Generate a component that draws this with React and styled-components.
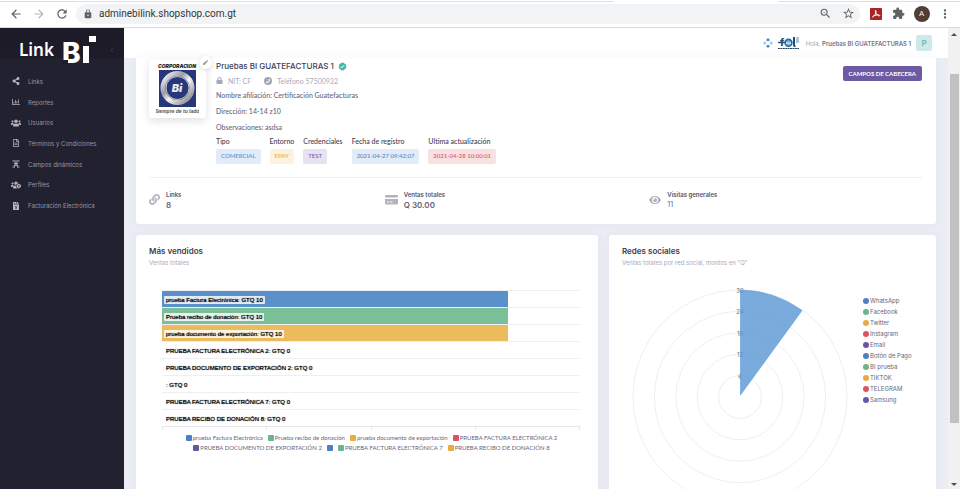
import React from "react";
import styled, { createGlobalStyle } from "styled-components";
import {
  FaShareAlt, FaRegChartBar, FaUsers, FaRegFileAlt, FaUsersCog, FaFileInvoiceDollar,
  FaLink, FaEye, FaLock, FaPen, FaPhone, FaChevronLeft,
} from "react-icons/fa";
import {
  MdArrowBack, MdArrowForward, MdRefresh, MdLock, MdZoomOut, MdStarBorder,
  MdExtension, MdMoreVert, MdVerified,
} from "react-icons/md";

const C = {
  blue: "#4c7fc3", green: "#68b68a", orange: "#e9ab41", red: "#dc5360", purple: "#6657a5",
  ink: "#413d51", text: "#68657b", muted: "#a9a9b8", line: "#efeff2", page: "#ebedf5",
};

const Global = createGlobalStyle`
  * { box-sizing: border-box; }
  html, body, #root { height: 100%; }
  body { margin: 0; overflow: hidden; background: #fff; font-family: Inter, "Noto Sans", sans-serif; font-size: 7px; color: ${C.text}; }
  button, input { font: inherit; border: 0; padding: 0; background: none; color: inherit; }
  a { color: inherit; text-decoration: none; }
  svg { display: block; flex: none; }
  h1, h2, p, dl, dd, dt, ul { margin: 0; padding: 0; }
`;

const Window = styled.div`
  display: flex; flex-direction: column; height: 100vh; padding-right: 2px;
`;
const BrowserBar = styled.header`
  display: flex; align-items: center; flex: none; height: 28px; padding: 0 4px;
  background: linear-gradient(90deg, #dcdee1 0 64%, #fff 64% 81%, #dcdee1 81%) 0 1px / 100% 1px no-repeat #fff;
  border-bottom: 1px solid #dcdcde; color: #5f6368;
`;
const ToolButton = styled.button`
  display: grid; place-items: center; width: 23px; height: 20px; color: ${(p) => p.$color || "#5f6368"};
`;
const NavButtons = styled.div`
  display: flex; width: 72px;
`;
const Address = styled.label`
  display: flex; align-items: center; flex: 1; min-width: 0; height: 20px; padding-left: 7px;
  border-radius: 10px; background: #f1f3f4;
`;
const AddressInput = styled.input`
  flex: 1; min-width: 0; margin-left: 6px; font: 10px Roboto, sans-serif; color: #33363b; outline: none;
`;
const Extensions = styled.div`
  display: flex; align-items: center; padding-left: 4px;
`;
const Avatar = styled.span`
  display: grid; place-items: center; width: 16px; height: 16px; border-radius: 50%;
  background: #553c35; color: #fff; font: 8px Roboto, sans-serif;
`;
const Body = styled.div`
  display: flex; flex: 1; min-height: 0;
`;
const Sidebar = styled.aside`
  flex: none; width: 124px; background: #22212f; color: #9696a8; overflow: hidden;
`;
const Brand = styled.div`
  display: flex; align-items: center; justify-content: space-between; height: 43px; padding: 0 1px 0 19px;
  background: linear-gradient(#1e1b28, #1e1c29) 0 0 / 100% 30px no-repeat;
`;
const BrandLink = styled.a`
  display: flex; align-items: center; gap: 8px; color: #fff; font: 600 17px "Noto Sans", sans-serif;
`;
const Menu = styled.nav`
  display: grid; grid-auto-rows: 1fr; height: 145px;
`;
const MenuLink = styled.a`
  display: flex; align-items: center; gap: 7px; padding-left: 10px; font-size: 6px; white-space: nowrap;
`;
const MenuIcon = styled.span`
  display: grid; place-items: center; width: 11px; color: #b3b3c4;
`;
const Main = styled.main`
  display: flex; flex-direction: column; flex: 1; min-width: 0; background: ${C.page}; overflow: hidden;
`;
const TopBar = styled.div`
  display: flex; align-items: center; justify-content: flex-end; gap: 5px; flex: none; height: 30px;
  padding-right: 16px; background: #fff; color: #a5a5b5; white-space: nowrap; font-size: 6px;
`;
const Hello = styled.span`
  b { font-weight: 600; color: #77748a; }
`;
const UserBadge = styled.button`
  width: 16px; height: 16px; border-radius: 2px; background: #cde9e9; color: #62bfbb; font-size: 8px; font-weight: 600;
`;
const Content = styled.div`
  display: flex; flex-direction: column; gap: 11px; flex: 1; min-height: 0; padding: 0 12px;
`;
const Card = styled.section`
  min-width: 0; padding: ${(p) => p.$pad || "10px 14px 0 13px"}; border-radius: ${(p) => p.$radius || "3px 3px 0 0"};
  background: #fff; box-shadow: 0 0 10px rgba(82, 63, 105, 0.05);
`;
const Profile = styled.div`
  display: flex; align-items: flex-start; gap: 10px; height: 120px; border-bottom: 1px solid ${C.line};
  font-family: Lato, sans-serif;
`;
const Thumb = styled.div`
  position: relative; flex: none; width: 57px; height: 58px; margin-top: 2px; padding: 3px 7px 0;
  border-radius: 3px; background: #fff; box-shadow: 0 3px 9px rgba(0, 0, 0, 0.12);
`;
const EditButton = styled.button`
  position: absolute; top: -4px; right: -6px; display: grid; place-items: center; width: 13px; height: 13px;
  border-radius: 50%; background: #fff; color: #9a98a8; box-shadow: 0 1px 5px rgba(0, 0, 0, 0.14);
`;
const Details = styled.div`
  flex: 1; min-width: 0; white-space: nowrap;
`;
const Name = styled.h1`
  display: flex; align-items: center; gap: 4px; height: 16px; font: 500 8px Inter, sans-serif; color: ${C.ink};
`;
const Facts = styled.p`
  display: flex; align-items: center; gap: 13px; height: 13px; color: ${C.muted};
`;
const Fact = styled.span`
  display: flex; align-items: center; gap: 5px;
`;
const PhoneDot = styled.span`
  display: grid; place-items: center; width: 8px; height: 8px; border-radius: 50%; background: #a6a5b6; color: #fff;
`;
const Line = styled.p`
  height: 16px; line-height: 16px; font-weight: 500;
`;
const Tags = styled.dl`
  display: flex; gap: 9px;
`;
const TagGroup = styled.div`
  dt { height: 14px; line-height: 12px; font-weight: 500; color: ${C.ink}; }
`;
const Tag = styled.dd`
  width: max-content; height: 15px; padding: 0 5px; border-radius: 2px; line-height: 14px; font-size: 6px; font-weight: 600;
  background: ${(p) => p.$bg}; color: ${(p) => p.$fg};
`;
const HeaderButton = styled.button`
  flex: none; height: 15px; margin-top: 8px; padding: 0 6px; border-radius: 2px; background: #6d5aa2;
  color: #fff; font-size: 6px; font-weight: 700;
`;
const Stats = styled.div`
  display: grid; grid-template-columns: 236fr 265fr 273fr; height: 46px; padding-bottom: 3px;
`;
const Stat = styled.div`
  display: flex; align-items: center; gap: 6px; color: #b3b1c0;
`;
const StatText = styled.div`
  line-height: 10px; font-size: ${(p) => (p.$link ? 7 : 8)}px; font-weight: ${(p) => (p.$link ? 500 : 600)}; color: ${C.text};
  strong { display: block; font-size: 6px; font-weight: 600; color: #55516a; }
  a { color: #5c86cb; }
`;
const Charts = styled.div`
  display: grid; grid-template-columns: 462fr 327fr; gap: 11px; flex: 1; min-height: 0;
`;
const Title = styled.h2`
  line-height: 12px; font-size: 8px; font-weight: 600; color: #403c4f;
`;
const Subtitle = styled.p`
  line-height: 12px; font-size: 6px; color: #aaa9b8;
`;
const Plot = styled.div`
  display: grid; grid-auto-rows: 17px; margin: 21px 4px 0 13px;
`;
const BarRow = styled.div`
  display: flex; align-items: center; position: relative; padding: 1px 0 0 2px; border-top: 1px solid ${C.line};
`;
const Bar = styled.div`
  position: absolute; inset: 0 auto 0 0; border-right: 1px solid #fff;
  background: ${(p) => p.$color};
`;
const BarLabel = styled.span`
  position: relative; padding: 0 2px; border-radius: 1px; background: rgba(255, 255, 255, 0.82);
  font: 6px/8px "Liberation Sans", sans-serif; color: #000; text-shadow: 0 0 1px #000; white-space: nowrap;
`;
const Axis = styled.div`
  display: grid; grid-template-columns: repeat(4, 1fr); height: 4px; margin: 0 4px 0 13px;
  border: solid #e6e6ea; border-width: 1px 1px 0 0;
  i { border-left: 1px solid #e6e6ea; }
`;
const Legend = styled.ul`
  display: flex; flex-wrap: wrap; justify-content: center; gap: 0 5px; margin: 3px 20px 0 30px; list-style: none;
  line-height: 10px; font-size: 6px; font-family: Lato, sans-serif;
`;
const LegendItem = styled.li`
  display: flex; align-items: center; gap: 1px; white-space: nowrap;
  &::before { content: ""; width: 6px; height: 6px; border-radius: ${(p) => (p.$round ? "50%" : "1px")}; background: ${(p) => p.$color}; }
`;
const PolarArea = styled.div`
  display: flex; align-items: flex-start; margin-top: 14px;
`;
const PolarLegend = styled.ul`
  margin-top: 12px; padding: 0; list-style: none; line-height: 11px; font-size: 6px;
`;
const Scrollbar = styled.div`
  display: flex; flex-direction: column; align-items: center; justify-content: space-between;
  flex: none; width: 12px; padding: 5px 0 3px; background: #f1f1f1;
`;
const ScrollThumb = styled.div`
  width: 9px; flex: 0 1 349px; margin: 0 0 22px; background: #c1c1c1;
`;
const Arrow = styled.span`
  border: solid transparent; border-width: 0 3px;
  ${(p) => (p.$down ? "border-top: 3px solid #505050;" : "border-bottom: 3px solid #505050;")}
`;

const FieldsIcon = () => (
  <svg width="8" height="8" viewBox="0 0 16 16" fill="none" stroke="currentColor" strokeWidth="2.4">
    <path d="M1 2h14M1 14h5M10 14h5M4 6l8 6M12 6l-8 6M5 6h6" />
  </svg>
);
const CardIcon = () => (
  <svg width="13" height="10" viewBox="0 0 13 10" fill="#b3b1c0">
    <rect width="13" height="2.6" rx="1" />
    <path fillRule="evenodd" d="M0 4h13v4.6a1 1 0 0 1-1 1H1a1 1 0 0 1-1-1zM2 6.6v1h2v-1zM5 6.6v1h2.5v-1z" />
  </svg>
);
const BiMark = () => (
  <svg width="35" height="42" viewBox="-1 -7 35 42" fill="#fff">
    <text x="-1" y="27" fontFamily="Inter, sans-serif" fontWeight="800" fontSize="28">B</text>
    <path fill="#1f1d2a" d="M-1 24h6v5h-6z" />
    <rect x="20" y="10" width="6" height="17" />
    <rect x="26" y="0" width="7" height="6" />
  </svg>
);
const MoveIcon = () => (
  <svg width="10" height="10" viewBox="0 0 20 20">
    <path fill="#4f86cc" d="M10 0l4 4-4 3-4-3zM10 20l4-4-4-3-4 3z" />
    <path fill="#a8c6ea" d="M0 10l4-4 3 4-3 4zM20 10l-4-4-3 4 3 4z" />
  </svg>
);
const FelLogo = () => (
  <svg width="22" height="13" viewBox="0 0 22 13">
    <text x="2" y="9" fontFamily="Inter, sans-serif" fontSize="10" fontWeight="800" fill="#234d73">f</text>
    <path d="M0 5.500h7" stroke="#234d73" strokeWidth="1.400" />
    <circle cx="10.500" cy="5.800" r="3.400" fill="#78b5e3" stroke="#2b6698" strokeWidth="1.600" />
    <path d="M8 6.200h5" stroke="#e8f4fb" strokeWidth="1" />
    <path d="M16 0v8.200q0 1 1.500 1" fill="none" stroke="#234d73" strokeWidth="2" />
    <path d="M18 1h3M18 3h3M18 5h3" stroke="#6f8da5" strokeWidth="1.200" />
    <path d="M0 11.500h21" stroke="#27455f" strokeWidth="1" strokeDasharray="2 .4" />
  </svg>
);
const AcrobatIcon = () => (
  <svg width="12" height="12" viewBox="0 0 12 12">
    <rect width="12" height="12" rx="1" fill="#a82523" />
    <path d="M2.500 9c1.400-.4 3.700-3.300 3.500-6.200-.1-.8-1-.6-.7.4C5.800 5.500 7.500 7.800 9 8c1.300-.1.700-1.300-.7-1.200C6 6.900 3.500 7.700 2.500 9z" fill="none" stroke="#fff" />
  </svg>
);
const CompanyLogo = () => (
  <svg width="43" height="53" viewBox="0 0 43 53" role="img" aria-label="Corporación Bi">
    <defs>
      <linearGradient id="silver" x1="0" y1="0" x2="1" y2="1">
        <stop offset="0" stopColor="#fff" /><stop offset=".35" stopColor="#999da3" />
        <stop offset=".55" stopColor="#f4f4f4" /><stop offset="1" stopColor="#777b82" />
      </linearGradient>
    </defs>
    <text x="21" y="5" textAnchor="middle" fontFamily="Inter, sans-serif" fontSize="5" fontWeight="900" fontStyle="italic" fill="#222">CORPORACION</text>
    <rect x="3" y="7" width="37" height="37" fill="#283779" />
    <circle cx="21.500" cy="25" r="14.500" fill="#283779" stroke="url(#silver)" strokeWidth="5" />
    <circle cx="21.500" cy="25" r="11.500" fill="none" stroke="#c9cbd2" strokeWidth="1" />
    <text x="21" y="29" textAnchor="middle" fontFamily="Inter, sans-serif" fontSize="11" fontWeight="900" fontStyle="italic" fill="#e7e8ec">Bi</text>
    <text x="21" y="50" textAnchor="middle" fontFamily="Liberation Sans, sans-serif" fontSize="5" fontWeight="700" fontStyle="italic" fill="#555">Siempre de tu lado</text>
  </svg>
);
const PolarChart = () => (
  <svg width="241" height="220" viewBox="0 0 241 220" role="img" aria-label="Ventas por red social">
    <g fill="none" stroke="#efeff1">
      {[1, 2, 3, 4, 5].map((n) => <circle key={n} cx="118" cy="114" r={n * 21.4} />)}
    </g>
    <g fontFamily="Inter, sans-serif" fontSize="6" fill="#6d6a78" textAnchor="middle">
      {[30, 24, 18, 12, 6].map((v, i) => <text key={v} x="118" y={10 + i * 21.4}>{v}</text>)}
    </g>
    <path d="M118.500 112V7A107 107 0 0 1 180 27.500z" fill="#5897d3" fillOpacity=".8" stroke="#5e9bd6" strokeWidth=".6" />
  </svg>
);

const menu = [
  ["Links", <FaShareAlt size={8} />], ["Reportes", <FaRegChartBar size={8} />], ["Usuarios", <FaUsers size={10} />],
  ["Términos y Condiciones", <FaRegFileAlt size={8} />], ["Campos dinámicos", <FieldsIcon />],
  ["Perfiles", <FaUsersCog size={10} />], ["Facturación Electrónica", <FaFileInvoiceDollar size={8} />],
];
const tags = [
  ["Tipo", "COMERCIAL", "#e1ecf8", "#6a94d0"], ["Entorno", "EPAY", "#fdf2df", "#e8b256"],
  ["Credenciales", "TEST", "#e8e2f0", "#7d66ad"], ["Fecha de registro", "2021-04-27 09:42:07", "#e1ecf8", "#6488c4"],
  ["Ultima actualización", "2021-04-28 10:00:01", "#f9e1e3", "#d55f69"],
];
const products = [
  ["prueba Factura Electrónica", 10, C.blue, "#5b91cb"], ["Prueba recibo de donación", 10, C.green, "#7bbf99"],
  ["prueba documento de exportación", 10, C.orange, "#ecbb5c"], ["PRUEBA FACTURA ELECTRÓNICA 2", 0, C.red],
  ["PRUEBA DOCUMENTO DE EXPORTACIÓN 2", 0, C.purple], ["", 0, C.blue],
  ["PRUEBA FACTURA ELECTRÓNICA 7", 0, C.green], ["PRUEBA RECIBO DE DONACIÓN 8", 0, C.orange],
];
const networks = ["WhatsApp", "Facebook", "Twitter", "Instagram", "Email", "Botón de Pago", "BI prueba", "TIKTOK", "TELEGRAM", "Samsung"];
const palette = [C.blue, C.green, C.orange, C.red, C.purple];

export default function App() {
  return (
    <Window>
      <Global />
      <BrowserBar>
        <NavButtons>
          <ToolButton aria-label="Atrás"><MdArrowBack size={14} /></ToolButton>
          <ToolButton aria-label="Adelante" $color="#b6b8bb"><MdArrowForward size={14} /></ToolButton>
          <ToolButton aria-label="Recargar"><MdRefresh size={14} /></ToolButton>
        </NavButtons>
        <Address>
          <MdLock size={10} />
          <AddressInput aria-label="Dirección web" defaultValue="adminebilink.shopshop.com.gt" />
          <ToolButton aria-label="Reducir"><MdZoomOut size={13} /></ToolButton>
          <ToolButton aria-label="Favorito"><MdStarBorder size={13} /></ToolButton>
        </Address>
        <Extensions>
          <ToolButton aria-label="Acrobat"><AcrobatIcon /></ToolButton>
          <ToolButton aria-label="Extensiones"><MdExtension size={13} /></ToolButton>
          <ToolButton aria-label="Cuenta"><Avatar>A</Avatar></ToolButton>
          <ToolButton aria-label="Más"><MdMoreVert size={14} /></ToolButton>
        </Extensions>
      </BrowserBar>
      <Body>
        <Sidebar>
          <Brand>
            <BrandLink href="#">Link<BiMark /></BrandLink>
            <ToolButton aria-label="Contraer" $color="#343247"><FaChevronLeft size={6} /></ToolButton>
          </Brand>
          <Menu>
            {menu.map(([label, icon]) => (
              <MenuLink href="#" key={label}><MenuIcon>{icon}</MenuIcon>{label}</MenuLink>
            ))}
          </Menu>
        </Sidebar>
        <Main>
          <TopBar>
            <MoveIcon />
            <ToolButton aria-label="FEL"><FelLogo /></ToolButton>
            <Hello>Hola, <b>Pruebas BI GUATEFACTURAS 1</b></Hello>
            <UserBadge>P</UserBadge>
          </TopBar>
          <Content>
            <Card $pad="0 14px 0 13px" $radius="0 0 3px 3px">
              <Profile>
                <Thumb>
                  <CompanyLogo />
                  <EditButton aria-label="Editar"><FaPen size={5} /></EditButton>
                </Thumb>
                <Details>
                  <Name>Pruebas BI GUATEFACTURAS 1 <MdVerified size={9} color="#45b5aa" /></Name>
                  <Facts>
                    <Fact><FaLock size={7} /> NIT: CF</Fact>
                    <Fact><PhoneDot><FaPhone size={4} /></PhoneDot> Teléfono 57500932</Fact>
                  </Facts>
                  <Line>Nombre afiliación: Certificación Guatefacturas</Line>
                  <Line>Dirección: 14-14 z10</Line>
                  <Line>Observaciones: asdsa</Line>
                  <Tags>
                    {tags.map(([label, value, bg, fg]) => (
                      <TagGroup key={label}><dt>{label}</dt><Tag $bg={bg} $fg={fg}>{value}</Tag></TagGroup>
                    ))}
                  </Tags>
                </Details>
                <HeaderButton>CAMPOS DE CABECERA</HeaderButton>
              </Profile>
              <Stats>
                <Stat><FaLink size={11} /><StatText><strong>Links</strong>8</StatText></Stat>
                <Stat><CardIcon /><StatText><strong>Ventas totales</strong>Q 30.00</StatText></Stat>
                <Stat><FaEye size={12} /><StatText $link><strong>Visitas generales</strong><a href="#">11</a></StatText></Stat>
              </Stats>
            </Card>
            <Charts>
              <Card>
                <Title>Más vendidos</Title>
                <Subtitle>Ventas totales</Subtitle>
                <Plot>
                  {products.map(([name, value, , fill]) => (
                    <BarRow key={name}>
                      {value > 0 && <Bar $color={fill} style={{ width: `${value * 8.3}%` }} />}
                      <BarLabel>{name}: GTQ {value}</BarLabel>
                    </BarRow>
                  ))}
                </Plot>
                <Axis><i /><i /><i /><i /></Axis>
                <Legend>
                  {products.map(([name, , color]) => <LegendItem key={name} $color={color}>{name}</LegendItem>)}
                </Legend>
              </Card>
              <Card>
                <Title>Redes sociales</Title>
                <Subtitle>Ventas totales por red social, montos en "Q"</Subtitle>
                <PolarArea>
                  <PolarChart />
                  <PolarLegend>
                    {networks.map((name, i) => <LegendItem key={name} $round $color={palette[i % 5]}>{name}</LegendItem>)}
                  </PolarLegend>
                </PolarArea>
              </Card>
            </Charts>
          </Content>
        </Main>
        <Scrollbar><Arrow /><ScrollThumb /><Arrow $down /></Scrollbar>
      </Body>
    </Window>
  );
}
